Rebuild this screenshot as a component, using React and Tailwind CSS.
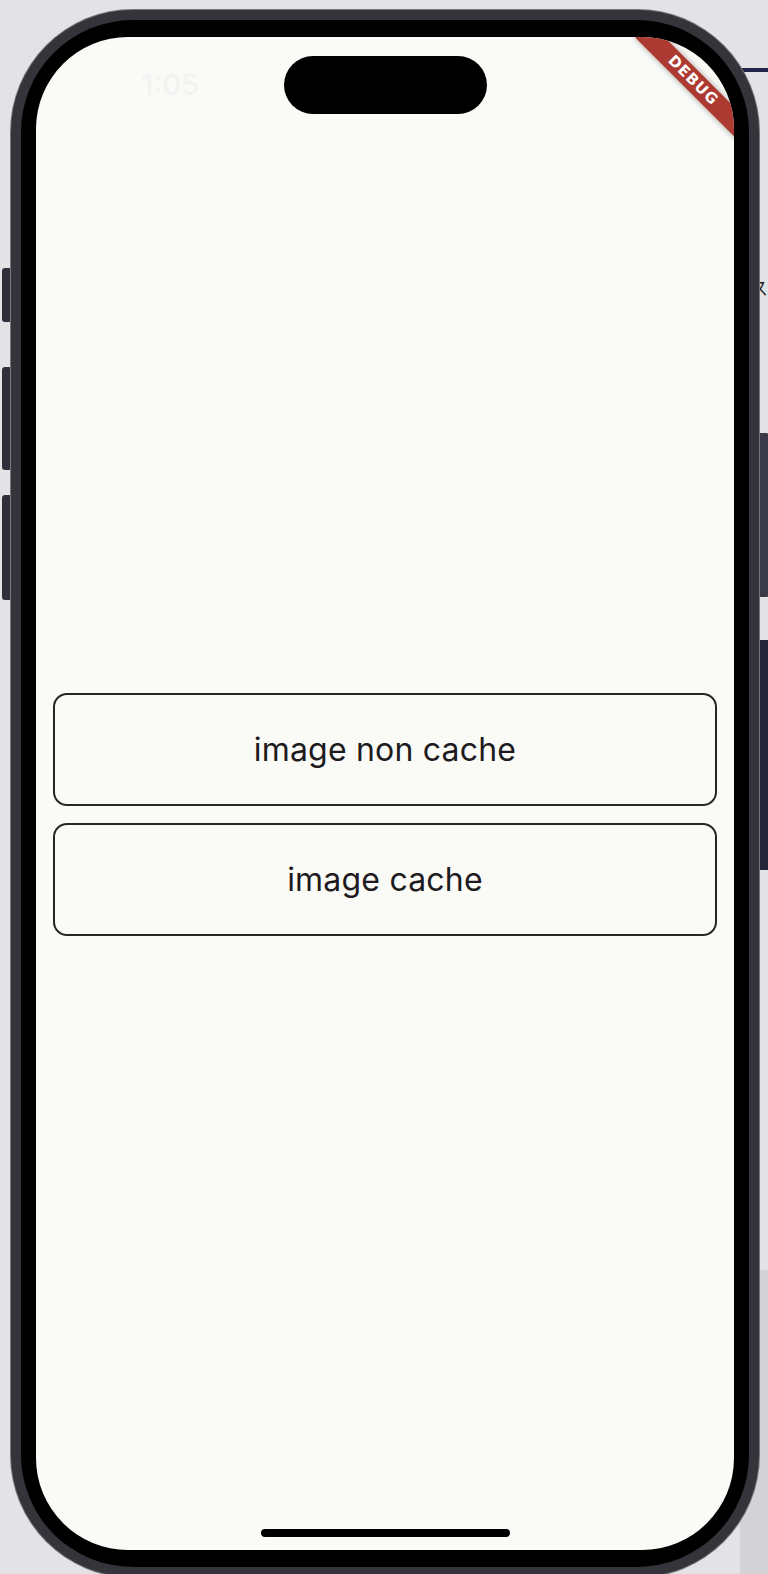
import React from 'react';

const OutlineButton = ({ label }) => (
  <button className="w-full h-[113px] rounded-[14px] border-2 border-[#262626] flex items-center justify-center text-[32px] text-[#1d1b20] tracking-[0.2px]">
    {label}
  </button>
);

const App = () => {
  return (
    <div
      className="relative w-[768px] h-[1574px] overflow-hidden bg-[#e3e3e6]"
      style={{ fontFamily: 'Inter, "Noto Sans", sans-serif' }}
    >
      {/* desktop bits peeking out behind the phone */}
      <div className="absolute left-[735px] top-[68px] w-[40px] h-[4px] bg-[#23234a]" />
      <div className="absolute left-[750px] top-[278px] text-[18px] leading-none text-[#222]" style={{ fontFamily: '"Noto Sans CJK JP", sans-serif' }}>ス</div>
      <div className="absolute left-[740px] top-[640px] w-[40px] h-[230px] bg-[#26263a]" />
      <div className="absolute left-[740px] top-[1270px] w-[40px] h-[310px] bg-[#d3d3d6]" />

      {/* side buttons */}
      <div className="absolute left-[2px] top-[268px] w-[10px] h-[54px] rounded-[3px] bg-[#2f2f3c]" />
      <div className="absolute left-[2px] top-[367px] w-[10px] h-[103px] rounded-[3px] bg-[#2f2f3c]" />
      <div className="absolute left-[2px] top-[495px] w-[10px] h-[105px] rounded-[3px] bg-[#2f2f3c]" />
      <div className="absolute left-[757px] top-[433px] w-[12px] h-[164px] rounded-[3px] bg-[#3a3a48]" />

      {/* phone frame */}
      <div className="relative ml-[11px] mt-[10px] w-[748px] rounded-[122px] bg-[#34343a] p-[10px] shadow-[0_0_0_1px_#77777d]">
        <div className="rounded-[112px] bg-black px-[15px] py-[17px]">
          <div className="relative w-[698px] h-[1513px] rounded-[92px] overflow-hidden bg-[#fafaf7] flex flex-col">
            {/* status bar + dynamic island */}
            <div className="flex items-center mt-[19px]">
              <div className="w-[248px] pl-[20px] text-center text-[29px] font-medium text-[#f3f3f3]">1:05</div>
              <div className="w-[203px] h-[58px] rounded-full bg-black" />
              <div className="flex-1" />
            </div>

            {/* buttons */}
            <div className="mt-[579px] px-[17px] flex flex-col gap-[17px]">
              <OutlineButton label="image non cache" />
              <OutlineButton label="image cache" />
            </div>

            <div className="flex-1" />

            {/* home indicator */}
            <div className="mx-auto mb-[13px] w-[249px] h-[8px] rounded-full bg-black" />

            {/* debug banner */}
            <div className="absolute left-[586px] top-[33px] w-[142px] h-[21px] rotate-45 bg-[#ad3a31] shadow-[0_0_6px_rgba(0,0,0,0.35)] flex items-center justify-center">
              <span
                className="text-white text-[15px] font-bold tracking-[1px] leading-none"
                style={{ fontFamily: '"DejaVu Sans", sans-serif' }}
              >
                DEBUG
              </span>
            </div>
          </div>
        </div>
      </div>
    </div>
  );
};

export default App;
